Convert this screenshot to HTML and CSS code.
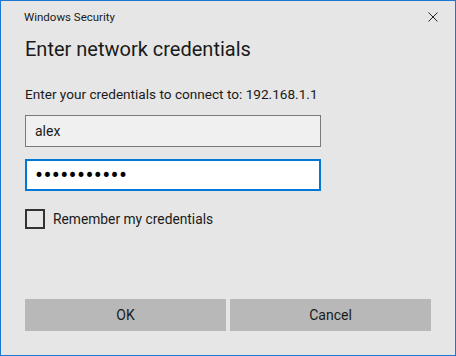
FILE: index.html
```html
<!DOCTYPE html>
<html lang="en">

<head>
  <meta charset="UTF-8" />
  <title>Windows Security</title>
  <link rel="stylesheet" href="styles.css">
</head>

<body>
  <div class="window">
    <div class="titlebar">
      <span class="title">Windows Security</span>
      <a class="close">
        <svg width="10" height="10" viewBox="0 0 10 10">
          <path d="M0.5 0.5 L9.5 9.5 M9.5 0.5 L0.5 9.5" stroke="#222" stroke-width="1" fill="none" />
        </svg>
      </a>
    </div>

    <div class="content">
      <h1>Enter network credentials</h1>
      <p class="prompt">Enter your credentials to connect to: 192.168.1.1</p>
      <input class="field" type="text" value="alex" />
      <input class="field focused" type="password" value="secretpass1" />
      <label class="remember">
        <span class="checkbox"></span>
        Remember my credentials
      </label>
    </div>

    <div class="buttons">
      <button class="btn">OK</button>
      <button class="btn">Cancel</button>
    </div>
  </div>
</body>

</html>
```

FILE: styles.css
```css
* {
  box-sizing: border-box;
}

body {
  margin: 0;
  font-family: Roboto, 'Noto Sans', sans-serif;
  color: #1a1a1a;
}

.window {
  width: 456px;
  height: 356px;
  background: #e6e6e6;
  border: 1px solid #1a78d2;
  display: flex;
  flex-direction: column;
}

.titlebar {
  display: flex;
  justify-content: space-between;
  align-items: center;
  height: 32px;
  padding: 0 17px 0 23px;
}

.title {
  font-size: 11.5px;
}

.close {
  display: flex;
  cursor: pointer;
}

.content {
  flex: 1;
  padding: 0 24px;
}

h1 {
  font-size: 20px;
  font-weight: normal;
  margin: 2px 0 0;
  line-height: 28px;
}

.prompt {
  font-size: 13.6px;
  margin: 22px 0 0;
  line-height: 18px;
}

.field {
  display: block;
  width: 296px;
  height: 32px;
  margin: 0;
  padding: 0 9px;
  font-family: inherit;
  font-size: 14px;
  color: #1a1a1a;
  background: #f0f0f0;
  border: 1px solid #7a7a7a;
  outline: none;
}

.field:first-of-type {
  margin-top: 12px;
}

.field.focused {
  margin-top: 12px;
  background: #fff;
  border: 2px solid #0078d7;
  padding: 0 8px;
  font-size: 24px;
  letter-spacing: 0.3px;
  color: #000;
}

.remember {
  display: flex;
  align-items: center;
  gap: 8px;
  margin-top: 18px;
  font-size: 13.8px;
}

.checkbox {
  width: 20px;
  height: 20px;
  border: 2px solid #333;
}

.buttons {
  display: flex;
  gap: 4px;
  padding: 0 0 24px 24px;
}

.btn {
  width: 201px;
  height: 32px;
  background: #b8b8b8;
  border: none;
  font-family: inherit;
  font-size: 14px;
  color: #1a1a1a;
}
```
